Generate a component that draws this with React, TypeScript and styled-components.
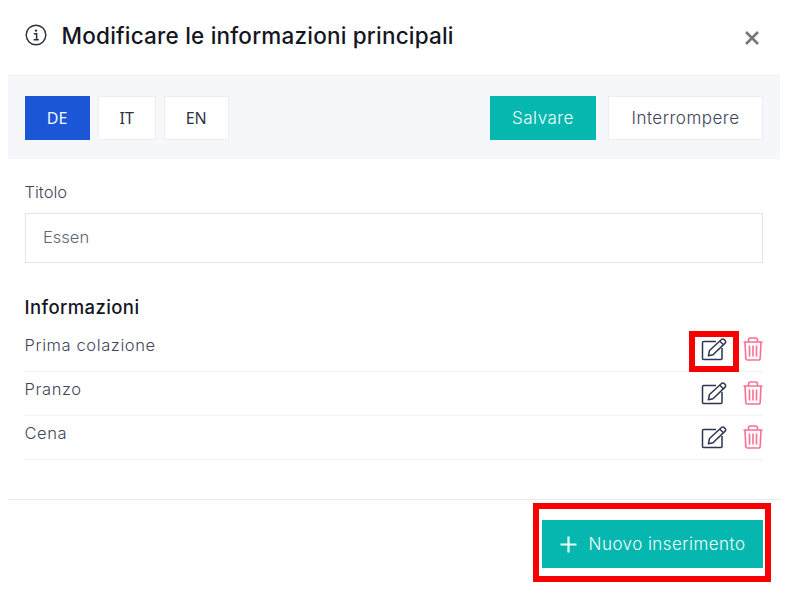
import * as React from 'react'
import styled, { createGlobalStyle } from 'styled-components'

const items = ['Prima colazione', 'Pranzo', 'Cena']

const EditIcon = () => (
    <svg width="27" height="24" viewBox="0 0 27 24" fill="none">
        <path
            d="M15 4.5H2.5a1 1 0 0 0-1 1v16a1 1 0 0 0 1 1h17.5a1 1 0 0 0 1-1V11"
            stroke="#2d3550"
            strokeWidth="1.5"
        />
        <path
            d="M8.5 13.5 20.5 2.5a1.8 1.8 0 0 1 2.6 0l1 1a1.8 1.8 0 0 1 0 2.6L12 17.8l-4.6 1z"
            stroke="#2d3550"
            strokeWidth="1.5"
            strokeLinejoin="round"
        />
        <path d="M18.8 4.2l3.6 3.6" stroke="#2d3550" strokeWidth="1.3" />
    </svg>
)

const TrashIcon = () => (
    <svg width="20" height="24" viewBox="0 0 20 24" fill="none">
        <path
            d="M0.5 5h19M5.5 5V3a2 2 0 0 1 2-2h5a2 2 0 0 1 2 2V5M2 5l.8 16.5a1.5 1.5 0 0 0 1.5 1.5h11.4a1.5 1.5 0 0 0 1.5-1.5L18 5M6.5 8.5v11M10 8.5v11M13.5 8.5v11"
            stroke="#fb6f92"
            strokeWidth="1.6"
        />
    </svg>
)

const InfoIcon = () => (
    <svg width="22" height="22" viewBox="0 0 22 22" fill="none">
        <circle cx="11" cy="11" r="9.8" stroke="#2a2f3c" strokeWidth="1.4" />
        <path
            d="M8.8 9.8H11.6V15.6M8.6 15.8H13.8"
            stroke="#2a2f3c"
            strokeWidth="1.5"
        />
        <circle cx="11" cy="6.6" r="1.2" fill="#2a2f3c" />
    </svg>
)

const CloseIcon = () => (
    <svg width="14" height="14" viewBox="0 0 14 14" fill="none">
        <path d="M1 1l12 12M13 1L1 13" stroke="#73767c" strokeWidth="2.6" />
    </svg>
)

const PlusIcon = () => (
    <svg width="17" height="17" viewBox="0 0 17 17" fill="none">
        <path d="M8.5 0.5v16M0.5 8.5h16" stroke="#eafffb" strokeWidth="2.2" />
    </svg>
)

export default function App() {
    return (
        <>
            <GlobalStyle />
            <ModalStyled>
                <HeaderStyled>
                    <InfoIcon />
                    <TitleStyled>
                        Modificare le informazioni principali
                    </TitleStyled>
                    <CloseBtnStyled title="Chiudi">
                        <CloseIcon />
                    </CloseBtnStyled>
                </HeaderStyled>
                <ToolbarStyled>
                    <LangBtnStyled $active $width={65}>
                        DE
                    </LangBtnStyled>
                    <LangBtnStyled $width={57.5}>IT</LangBtnStyled>
                    <LangBtnStyled $width={64.5}>EN</LangBtnStyled>
                    <SaveBtnStyled>Salvare</SaveBtnStyled>
                    <CancelBtnStyled>Interrompere</CancelBtnStyled>
                </ToolbarStyled>
                <FormStyled>
                    <LabelStyled>Titolo</LabelStyled>
                    <InputStyled defaultValue="Essen" />
                    <SectionTitleStyled>Informazioni</SectionTitleStyled>
                    {items.map((item, i) => (
                        <RowStyled key={item}>
                            <RowTextStyled>{item}</RowTextStyled>
                            <IconBtnStyled title="Modifica">
                                <EditIcon />
                                {i === 0 && <EditHighlightStyled />}
                            </IconBtnStyled>
                            <IconBtnStyled title="Elimina">
                                <TrashIcon />
                            </IconBtnStyled>
                        </RowStyled>
                    ))}
                </FormStyled>
                <FooterStyled>
                    <AddBtnStyled>
                        <PlusIcon />
                        Nuovo inserimento
                        <AddHighlightStyled />
                    </AddBtnStyled>
                </FooterStyled>
            </ModalStyled>
        </>
    )
}

const GlobalStyle = createGlobalStyle`
    html, body {
        margin: 0;
        padding: 0;
        background: #fff;
    }

    body {
        font-family: 'Inter', 'Liberation Sans', sans-serif;
    }

    * {
        box-sizing: border-box;
    }
`

const ModalStyled = styled.div`
    width: 772px;
    height: 596px;
    margin-left: 8px;
    background: #fff;
`

const HeaderStyled = styled.div`
    height: 76px;
    display: flex;
    align-items: center;
    padding: 0 17px 5px 16.5px;
    border-bottom: 1px solid #eeeff4;
`

const TitleStyled = styled.div`
    margin-left: 15px;
    font-size: 22.5px;
    font-weight: 500;
    letter-spacing: 0.2px;
    color: #14161f;
`

const CloseBtnStyled = styled.button`
    margin-left: auto;
    margin-right: 4px;
    margin-top: 5px;
    padding: 0;
    display: flex;
    border: none;
    background: none;
`

const ToolbarStyled = styled.div`
    height: 83px;
    display: flex;
    align-items: flex-start;
    padding: 20px 17px 0 16.5px;
    background: #f6f7fa;
`

const ToolbarBtnStyled = styled.button`
    height: 44px;
    padding: 0;
    font-family: inherit;
    font-size: 17px;
    font-weight: 300;
    letter-spacing: 0.5px;
    border: 1px solid #eceef4;
    background: #fff;
    color: #3a3f50;
`

const LangBtnStyled = styled(ToolbarBtnStyled)<{
    $active?: boolean
    $width: number
}>`
    width: ${(props) => props.$width}px;
    margin-right: 8.5px;
    font-family: 'Noto Sans', sans-serif;
    font-size: 16px;
    font-weight: 400;
    letter-spacing: 0;
    background: ${(props) => (props.$active ? '#1a56d6' : '#fff')};
    border-color: ${(props) => (props.$active ? '#1a56d6' : '#eceef4')};
    color: ${(props) => (props.$active ? '#f2f6ff' : '#2c3142')};
`

const SaveBtnStyled = styled(ToolbarBtnStyled)`
    width: 106px;
    margin-left: auto;
    margin-right: 12px;
    background: #06b7b0;
    border-color: #06b7b0;
    color: #f0fdfb;
`

const CancelBtnStyled = styled(ToolbarBtnStyled)`
    width: 155px;
    color: #3f445a;
`

const FormStyled = styled.div`
    padding: 23px 17px 0 17px;
`

const LabelStyled = styled.div`
    height: 31px;
    margin-left: -0.5px;
    font-size: 16.5px;
    font-weight: 300;
    line-height: 20px;
    color: #3f455a;
`

const InputStyled = styled.input`
    display: block;
    width: 100%;
    height: 50px;
    padding: 0 17px 2px 17px;
    font-family: inherit;
    font-size: 16.5px;
    font-weight: 300;
    color: #5f6478;
    border: 1px solid #e3e4ec;
    outline: none;
    background: #fff;
`

const SectionTitleStyled = styled.div`
    margin-top: 32px;
    margin-left: -0.5px;
    height: 33px;
    font-size: 18.5px;
    line-height: 24px;
    font-weight: 500;
    letter-spacing: 0.4px;
    color: #14161f;
`

const RowStyled = styled.div`
    height: 44px;
    display: flex;
    align-items: flex-start;
    border-bottom: 1px solid #f1f2f5;
`

const RowTextStyled = styled.div`
    margin-right: auto;
    margin-left: -0.5px;
    padding-top: 7px;
    font-size: 16.5px;
    font-weight: 300;
    letter-spacing: 0.6px;
    line-height: 20px;
    color: #3f455a;
`

const IconBtnStyled = styled.button`
    position: relative;
    margin-left: 15px;
    margin-top: 9px;
    padding: 0;
    display: flex;
    border: none;
    background: none;
`

const EditHighlightStyled = styled.span`
    position: absolute;
    top: -6px;
    left: -12px;
    width: 50px;
    height: 41px;
    border: 6px solid #f90000;
`

const FooterStyled = styled.div`
    margin-top: 39px;
    display: flex;
    justify-content: flex-end;
    padding: 20px 17px 0 17px;
    border-top: 1px solid #e9eaef;
`

const AddBtnStyled = styled.button`
    position: relative;
    width: 221px;
    height: 48px;
    display: flex;
    align-items: center;
    justify-content: center;
    gap: 12px;
    padding: 0;
    font-family: inherit;
    font-size: 17px;
    font-weight: 300;
    letter-spacing: 0.45px;
    border: none;
    background: #06b7b0;
    color: #f0fdfb;
`

const AddHighlightStyled = styled.span`
    position: absolute;
    top: -17px;
    left: -9px;
    width: 238px;
    height: 79px;
    border: 6px solid #f90000;
`
